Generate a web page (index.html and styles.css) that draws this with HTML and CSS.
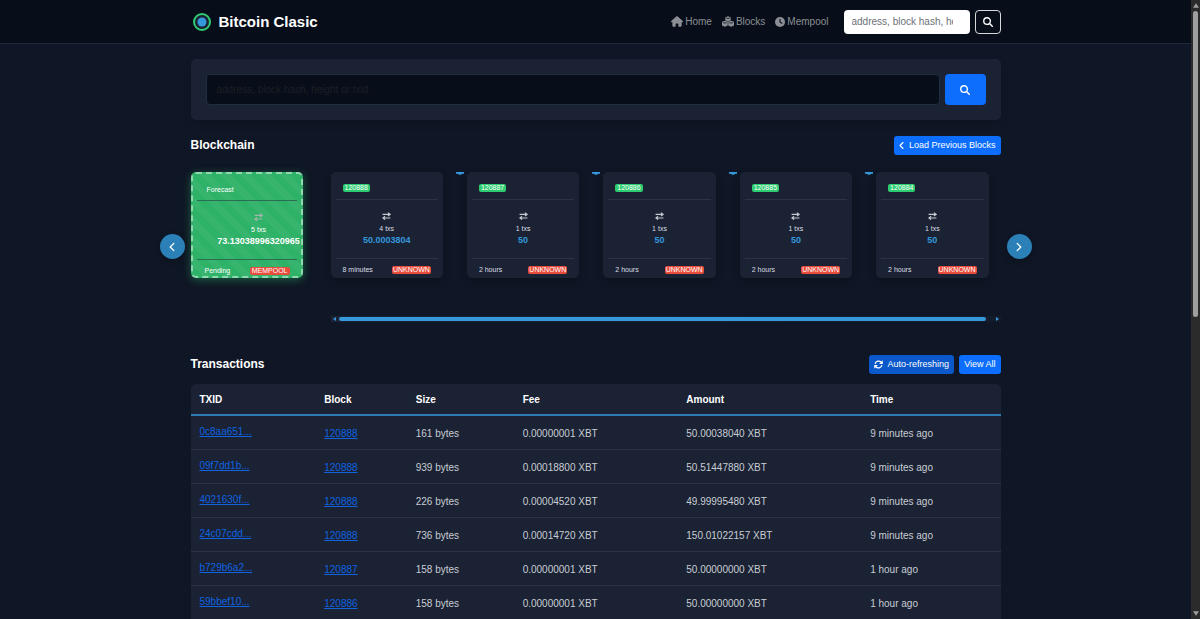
FILE: index.html
```html
<!DOCTYPE html>
<html lang="en">
<head>
<meta charset="utf-8">
<title>Bitcoin Clasic</title>
<link rel="stylesheet" href="styles.css">
</head>
<body>
<svg class="sprite" aria-hidden="true">
  <symbol id="i-search" viewBox="0 0 16 16"><circle cx="6.500" cy="6.500" r="5.300" fill="none" stroke="currentColor" stroke-width="2.200"/><path d="m10.500 10.500 4.300 4.300" stroke="currentColor" stroke-width="2.400" stroke-linecap="round"/></symbol>
  <symbol id="i-swap" viewBox="0 0 16 14"><path d="M1 4h13M10.500 1l4 3-4 3M15 10.500H2M5.500 7.500l-4 3 4 3" fill="none" stroke="currentColor" stroke-width="2"/></symbol>
  <symbol id="i-left" viewBox="0 0 10 16"><path d="M8 2 2 8l6 6" fill="none" stroke="currentColor" stroke-width="2.200" stroke-linecap="round" stroke-linejoin="round"/></symbol>
  <symbol id="i-right" viewBox="0 0 10 16"><path d="m2 2 6 6-6 6" fill="none" stroke="currentColor" stroke-width="2.200" stroke-linecap="round" stroke-linejoin="round"/></symbol>
  <symbol id="i-down" viewBox="0 0 8 3"><path d="M0 0h8v1.800H6.500L4 3 1.500 1.800H0z"/></symbol>
</svg>
<div class="window">
  <div class="page">
    <header class="topbar">
      <div class="container topbar-row">
        <a class="brand" href="#">
          <svg viewBox="0 0 18 18" aria-hidden="true"><circle cx="9" cy="9" r="8" fill="#1a2234" stroke="#2ecc71" stroke-width="2"/><circle cx="9" cy="9" r="4.500" fill="#3498db"/></svg>
          <span>Bitcoin Clasic</span>
        </a>
        <nav class="menu">
          <a href="#"><svg viewBox="0 0 576 512" aria-hidden="true"><path d="M576 256c0 18-15 32-32 32h-32l1 160c0 36-28 64-64 64h-65c-17 0-32-14-32-32v-96c0-18-14-32-32-32h-64c-18 0-32 14-32 32v96c0 18-15 32-32 32h-64c-36 0-64-28-64-64V288H32c-18 0-32-14-32-32 0-9 3-17 10-24L266 8c7-7 15-8 22-8s15 2 21 7l255 225c8 7 12 15 12 24z"/></svg>Home</a>
          <a href="#"><svg viewBox="0 0 576 512" aria-hidden="true"><path d="m288 0 130 48v150l-130 52-130-52V48zM138 216l138 52v180L138 512 0 448V268zM438 216l138 52v180l-138 64-138-64V268z"/><path d="m200 78 88 34 88-34M50 304l88 34 88-34M350 304l88 34 88-34" fill="none" stroke="#080e19" stroke-width="38"/></svg>Blocks</a>
          <a href="#"><svg class="clock" viewBox="0 0 16 16" aria-hidden="true"><circle cx="8" cy="8" r="8"/><path d="M8 3.500V8l3 2" fill="none" stroke="#080e19" stroke-width="1.800" stroke-linecap="round"/></svg>Mempool</a>
        </nav>
        <form class="quick">
          <input type="text" aria-label="Quick search" placeholder="address, block hash, height or txid">
          <button type="button" aria-label="Search"><svg class="lens"><use href="#i-search"/></svg></button>
        </form>
      </div>
    </header>

    <main class="container content">
      <form class="search">
        <input type="text" aria-label="Search the chain" placeholder="address, block hash, height or txid">
        <button type="button" aria-label="Search"><svg class="lens"><use href="#i-search"/></svg></button>
      </form>

      <div class="heading">
        <h2>Blockchain</h2>
        <button class="btn" type="button"><svg class="chev"><use href="#i-left"/></svg>Load Previous Blocks</button>
      </div>

      <section class="chain">
        <button class="round prev" type="button" aria-label="Previous"><svg><use href="#i-left"/></svg></button>
        <article class="block forecast">
          <div class="block-head"><span>Forecast</span></div>
          <div class="block-body"><svg class="swap"><use href="#i-swap"/></svg><span class="txs">5 txs</span><strong>73.13038996320965</strong></div>
          <div class="block-foot"><span>Pending</span><b>MEMPOOL</b></div>
        </article>
        <div class="strip">
          <div class="blocks">
            <article class="block">
              <div class="block-head"><span class="height">120888</span></div>
              <div class="block-body"><svg class="swap"><use href="#i-swap"/></svg><span class="txs">4 txs</span><strong>50.0003804</strong></div>
              <div class="block-foot"><span>8 minutes</span><b>UNKNOWN</b></div>
            </article>
            <article class="block">
              <svg class="link-mark"><use href="#i-down"/></svg>
              <div class="block-head"><span class="height">120887</span></div>
              <div class="block-body"><svg class="swap"><use href="#i-swap"/></svg><span class="txs">1 txs</span><strong>50</strong></div>
              <div class="block-foot"><span>2 hours</span><b>UNKNOWN</b></div>
            </article>
            <article class="block">
              <svg class="link-mark"><use href="#i-down"/></svg>
              <div class="block-head"><span class="height">120886</span></div>
              <div class="block-body"><svg class="swap"><use href="#i-swap"/></svg><span class="txs">1 txs</span><strong>50</strong></div>
              <div class="block-foot"><span>2 hours</span><b>UNKNOWN</b></div>
            </article>
            <article class="block">
              <svg class="link-mark"><use href="#i-down"/></svg>
              <div class="block-head"><span class="height">120885</span></div>
              <div class="block-body"><svg class="swap"><use href="#i-swap"/></svg><span class="txs">1 txs</span><strong>50</strong></div>
              <div class="block-foot"><span>2 hours</span><b>UNKNOWN</b></div>
            </article>
            <article class="block">
              <svg class="link-mark"><use href="#i-down"/></svg>
              <div class="block-head"><span class="height">120884</span></div>
              <div class="block-body"><svg class="swap"><use href="#i-swap"/></svg><span class="txs">1 txs</span><strong>50</strong></div>
              <div class="block-foot"><span>2 hours</span><b>UNKNOWN</b></div>
            </article>
          </div>
          <div class="hbar" aria-hidden="true">
            <svg viewBox="0 0 3 4"><path d="M3 0v4L0 2z"/></svg>
            <div class="hbar-track"><div class="hbar-thumb"></div></div>
            <svg viewBox="0 0 3 4"><path d="M0 0v4l3-2z"/></svg>
          </div>
        </div>
        <button class="round next" type="button" aria-label="Next"><svg><use href="#i-right"/></svg></button>
      </section>

      <div class="heading">
        <h2>Transactions</h2>
        <div class="actions">
          <button class="btn pressed" type="button"><svg class="refresh" viewBox="0 0 16 16" aria-hidden="true"><path d="M2 7a6.200 6.200 0 0 1 10.800-3L14.500 5.500M14 9a6.200 6.200 0 0 1-10.800 3L1.500 10.500" fill="none" stroke="currentColor" stroke-width="2.200"/><path d="M15.500.5v6.500H9zM.5 15.500V9H7z"/></svg>Auto-refreshing</button>
          <a class="btn" href="#">View All</a>
        </div>
      </div>

      <table class="txns">
        <thead>
          <tr><th class="c-id">TXID</th><th class="c-block">Block</th><th class="c-size">Size</th><th class="c-fee">Fee</th><th class="c-amount">Amount</th><th>Time</th></tr>
        </thead>
        <tbody>
          <tr><td class="txid"><a href="#">0c8aa651...</a></td><td><a href="#">120888</a></td><td>161 bytes</td><td>0.00000001 XBT</td><td>50.00038040 XBT</td><td>9 minutes ago</td></tr>
          <tr><td class="txid"><a href="#">09f7dd1b...</a></td><td><a href="#">120888</a></td><td>939 bytes</td><td>0.00018800 XBT</td><td>50.51447880 XBT</td><td>9 minutes ago</td></tr>
          <tr><td class="txid"><a href="#">4021630f...</a></td><td><a href="#">120888</a></td><td>226 bytes</td><td>0.00004520 XBT</td><td>49.99995480 XBT</td><td>9 minutes ago</td></tr>
          <tr><td class="txid"><a href="#">24c07cdd...</a></td><td><a href="#">120888</a></td><td>736 bytes</td><td>0.00014720 XBT</td><td>150.01022157 XBT</td><td>9 minutes ago</td></tr>
          <tr><td class="txid"><a href="#">b729b6a2...</a></td><td><a href="#">120887</a></td><td>158 bytes</td><td>0.00000001 XBT</td><td>50.00000000 XBT</td><td>1 hour ago</td></tr>
          <tr><td class="txid"><a href="#">59bbef10...</a></td><td><a href="#">120886</a></td><td>158 bytes</td><td>0.00000001 XBT</td><td>50.00000000 XBT</td><td>1 hour ago</td></tr>
        </tbody>
      </table>
    </main>
  </div>
  <div class="vbar" aria-hidden="true">
    <svg viewBox="0 0 7 5"><path d="M3.500 0 7 5H0z"/></svg>
    <div class="vbar-track"><div class="vbar-thumb"></div></div>
    <svg viewBox="0 0 7 5"><path d="M0 0h7L3.500 5z"/></svg>
  </div>
</div>
</body>
</html>
```
FILE: styles.css
```css
* { box-sizing: border-box; }

body {
  margin: 0;
  background: #0f1625;
  color: #fff;
  font: 10px/15px "Liberation Sans", Arial, sans-serif;
}

svg { display: block; fill: currentColor; }
.sprite { display: none; }
button, input { font: inherit; margin: 0; }
a { color: #1163e0; }
h2 { margin: 0; font-size: 12px; }

.window { display: flex; height: 100vh; }
.page { flex: 1; min-width: 0; overflow-y: auto; scrollbar-width: none; }
.container { width: 100%; max-width: 810px; margin: 0 auto; }

/* Top bar */
.topbar { background: #080e19; border-bottom: 1px solid #1e293b; }
.topbar-row { display: flex; align-items: center; height: 43px; }
.brand {
  display: flex;
  align-items: center;
  gap: 8px;
  margin-right: auto;
  padding-left: 2px;
  color: #fff;
  font-size: 15px;
  font-weight: bold;
  text-decoration: none;
}
.brand svg { width: 18px; height: 18px; }
.menu { display: flex; gap: 10px; }
.menu a {
  display: flex;
  align-items: center;
  gap: 2px;
  color: #8b8e94;
  text-decoration: none;
}
.menu svg { width: 12px; height: 11px; }
.menu .clock { width: 10px; height: 10px; }
.quick { display: flex; gap: 5px; margin-left: 15px; }
.quick input {
  width: 126px;
  height: 24px;
  padding: 0 17px 0 8px;
  background: #fff;
  border: 0;
  border-radius: 4px;
}
.quick input::placeholder { color: #6b7075; opacity: 1; }
.quick button {
  display: grid;
  place-items: center;
  width: 26px;
  height: 24px;
  padding: 0;
  background: none;
  border: 1px solid #d5d8dc;
  border-radius: 4px;
  color: #fff;
}
.lens { width: 10px; height: 10px; }

/* Main search */
.content { padding-top: 15px; }
.search {
  display: flex;
  gap: 5px;
  padding: 15px;
  background: #1a2234;
  border-radius: 5px;
  box-shadow: 0 3px 8px rgba(0, 0, 0, .12);
}
.search input {
  flex: 1;
  min-width: 0;
  height: 31px;
  padding: 0 10px;
  background: #080e19;
  border: 1px solid #1e2d40;
  border-radius: 4px;
  color: #fff;
}
.search input::placeholder { color: #1b1f26; opacity: 1; }
.search button {
  display: grid;
  place-items: center;
  width: 41px;
  padding: 0;
  background: #0d6efd;
  border: 0;
  border-radius: 4px;
  color: #fff;
}

.heading {
  display: flex;
  align-items: center;
  justify-content: space-between;
  height: 19px;
  margin-top: 16px;
}
.actions { display: flex; gap: 5px; }
.btn {
  display: flex;
  align-items: center;
  gap: 5px;
  height: 19px;
  padding: 0 5px;
  background: #0d6efd;
  border: 0;
  border-radius: 3px;
  color: #fff;
  font-size: 9px;
  text-decoration: none;
}
.pressed { background: #0a58ca; }
.chev { width: 5px; height: 9px; }
.refresh { width: 9px; height: 9px; }

/* Block carousel */
.chain {
  position: relative;
  display: flex;
  align-items: flex-start;
  gap: 28px;
  margin: 17px 0 33px;
}
.strip { flex: 1; min-width: 0; }
.blocks {
  display: grid;
  grid-template-columns: repeat(5, 1fr);
  gap: 24px;
  padding-right: 12px;
}
.block {
  position: relative;
  min-width: 0;
  height: 106px;
  padding: 0 5px;
  background: #1a2234;
  border-radius: 5px;
  box-shadow: 0 3px 8px rgba(0, 0, 0, .2);
  color: #dcdfe3;
  font-size: 7px;
  line-height: 8px;
}
.block-head {
  display: flex;
  height: 28px;
  padding: 12px 7px 7px;
  border-bottom: 1px solid #2b3344;
}
.height {
  height: 8px;
  padding: 0 2px;
  background: #2ecc71;
  border-radius: 2px;
  color: #fff;
}
.block-body {
  display: flex;
  flex-direction: column;
  align-items: center;
  height: 58px;
  padding-top: 12px;
}
.swap { width: 9px; height: 8px; margin-bottom: 4px; color: #c3c8cd; }
.txs { line-height: 10px; }
.block-body strong { color: #3498db; font-size: 9px; line-height: 12px; white-space: nowrap; }
.block-foot {
  display: flex;
  align-items: center;
  justify-content: space-between;
  padding: 7px 7px 0;
  border-top: 1px solid #2b3344;
}
.block-foot b {
  padding: 0 1px;
  background: #e74c3c;
  border-radius: 2px;
  color: #fff;
  font-weight: normal;
}
.link-mark {
  position: absolute;
  left: -11px;
  top: 0;
  width: 8px;
  height: 3px;
  color: #3498db;
}
.forecast {
  flex: none;
  width: 112px;
  padding: 0 4px;
  background: repeating-linear-gradient(45deg, #2eb267 0 7px, #37b56e 7px 14px);
  border: 2px dashed #8fd9b0;
  box-shadow: 0 2px 8px rgba(46, 204, 113, .4);
  color: #fff;
}
.forecast .block-head { height: 27px; padding: 12px 10px 6px; border-color: #2b6c55; }
.forecast .block-body { padding-left: 24px; }
.forecast .block-body strong { color: #fff; }
.forecast .swap { color: #a3b5ae; }
.forecast .block-foot { border-color: #2b6c55; padding-left: 8px; }
.forecast .block-foot b { padding: 0 2px; }

.hbar {
  display: flex;
  align-items: center;
  gap: 3px;
  height: 6px;
  margin-top: 38px;
  padding: 0 2px;
  background: linear-gradient(90deg, #1a2234, #141c2c);
  color: #3498db;
}
.hbar svg { width: 3px; height: 4px; }
.hbar-track { flex: 1; }
.hbar-thumb { width: 99%; height: 4px; background: #3498db; border-radius: 2px; }

.round {
  position: absolute;
  top: 62px;
  display: grid;
  place-items: center;
  width: 25px;
  height: 25px;
  padding: 0;
  background: #2c80b8;
  border: 0;
  border-radius: 50%;
  box-shadow: 0 2px 6px rgba(0, 0, 0, .25);
  color: #fff;
}
.round svg { width: 6px; height: 10px; }
.prev { left: -31px; }
.next { right: -31px; }

/* Transactions */
.txns {
  width: 100%;
  margin-top: 10px;
  background: #1a2234;
  border-radius: 5px 5px 0 0;
  border-spacing: 0;
  table-layout: fixed;
}
.txns th {
  height: 32px;
  padding: 0 9px;
  border-bottom: 2px solid #2b7cb4;
  text-align: left;
}
.txns td {
  height: 34px;
  padding: 2px 9px 1px;
  border-bottom: 1px solid #2b3344;
  color: #c9cdd3;
}
.txns td.txid { padding-bottom: 5px; }
.c-id { width: 15.400%; }
.c-block { width: 11.300%; }
.c-size { width: 13.200%; }
.c-fee { width: 20.200%; }
.c-amount { width: 22.700%; }

/* Window scroll bar */
.vbar {
  display: flex;
  flex-direction: column;
  align-items: center;
  gap: 3px;
  width: 9px;
  padding: 3px 0;
  background: #2b2b2b;
  color: #9f9f9f;
}
.vbar svg { width: 6px; height: 5px; }
.vbar-track { flex: 1; width: 5px; }
.vbar-thumb { height: 51.200%; background: #9f9f9f; border-radius: 3px; }
```
